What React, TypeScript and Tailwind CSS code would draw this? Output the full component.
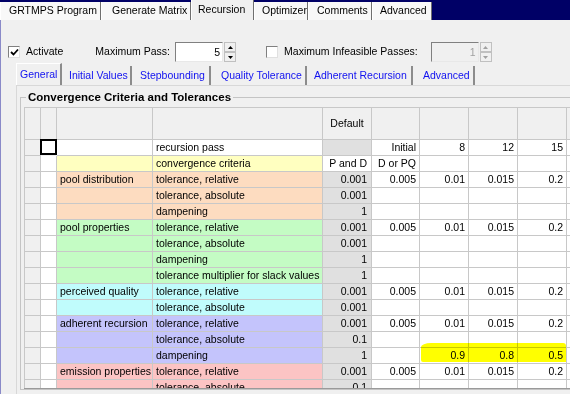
import React from 'react';

type Row = {
  bg: string;
  group?: string;
  label: string;
  def?: string;
  defWhite?: boolean;
  vals?: string[];
};

const rows: Row[] = [
  { bg: 'bg-white', label: 'recursion pass', vals: ['Initial', '8', '12', '15'] },
  { bg: 'bg-[#ffffc0]', label: 'convergence criteria', def: 'P and D', defWhite: true, vals: ['D or PQ'] },
  { bg: 'bg-[#fddcc0]', group: 'pool distribution', label: 'tolerance, relative', def: '0.001', vals: ['0.005', '0.01', '0.015', '0.2'] },
  { bg: 'bg-[#fddcc0]', label: 'tolerance, absolute', def: '0.001' },
  { bg: 'bg-[#fddcc0]', label: 'dampening', def: '1' },
  { bg: 'bg-[#c4fcc4]', group: 'pool properties', label: 'tolerance, relative', def: '0.001', vals: ['0.005', '0.01', '0.015', '0.2'] },
  { bg: 'bg-[#c4fcc4]', label: 'tolerance, absolute', def: '0.001' },
  { bg: 'bg-[#c4fcc4]', label: 'dampening', def: '1' },
  { bg: 'bg-[#c4fcc4]', label: 'tolerance multiplier for slack values', def: '1' },
  { bg: 'bg-[#c0fcfc]', group: 'perceived quality', label: 'tolerance, relative', def: '0.001', vals: ['0.005', '0.01', '0.015', '0.2'] },
  { bg: 'bg-[#c0fcfc]', label: 'tolerance, absolute', def: '0.001' },
  { bg: 'bg-[#c4c4fc]', group: 'adherent recursion', label: 'tolerance, relative', def: '0.001', vals: ['0.005', '0.01', '0.015', '0.2'] },
  { bg: 'bg-[#c4c4fc]', label: 'tolerance, absolute', def: '0.1' },
  { bg: 'bg-[#c4c4fc]', label: 'dampening', def: '1', vals: ['', '0.9', '0.8', '0.5'] },
  { bg: 'bg-[#fcc4c4]', group: 'emission properties', label: 'tolerance, relative', def: '0.001', vals: ['0.005', '0.01', '0.015', '0.2'] },
  { bg: 'bg-[#fcc4c4]', label: 'tolerance, absolute', def: '0.1' },
];

const cell = 'border-r border-b border-[#c8c8c8] h-[16px] leading-[15px] whitespace-nowrap overflow-hidden';
const head = 'border-r border-b border-[#c8c8c8] h-[32px] bg-[#f0f0f0]';

function Check({ on }: { on?: boolean }) {
  return (
    <span className="w-[12px] h-[12px] bg-white border border-t-[#808080] border-l-[#808080] border-b-[#e0e0e0] border-r-[#e0e0e0] flex items-center justify-center">
      {on && (
        <svg width="9" height="9" viewBox="0 0 9 9">
          <path d="M1 4 L3.5 6.5 L8 1.5" stroke="#000" strokeWidth="1.8" fill="none" />
        </svg>
      )}
    </span>
  );
}

function Spin({ value, disabled }: { value: string; disabled?: boolean }) {
  const c = disabled ? '#a0a0a0' : '#000';
  return (
    <div className="flex items-center h-[20px]">
      <div
        className={`w-[48px] h-[20px] border border-t-[#808080] border-l-[#808080] border-b-[#e8e8e8] border-r-[#e8e8e8] text-right pr-[2px] leading-[18px] ${
          disabled ? 'bg-[#f0f0f0] text-[#a0a0a0]' : 'bg-white'
        }`}
      >
        {value}
      </div>
      <div className="flex flex-col ml-px">
        <div className="w-[12px] h-[10px] bg-[#f0f0f0] border border-[#c0c0c0] flex items-center justify-center">
          <svg width="5" height="3" viewBox="0 0 5 3">
            <path d="M0 3 L2.5 0 L5 3Z" fill={c} />
          </svg>
        </div>
        <div className="w-[12px] h-[10px] bg-[#f0f0f0] border border-[#c0c0c0] flex items-center justify-center">
          <svg width="5" height="3" viewBox="0 0 5 3">
            <path d="M0 0 L5 0 L2.5 3Z" fill={c} />
          </svg>
        </div>
      </div>
    </div>
  );
}

const topTabs = [
  { t: 'GRTMPS Program', w: 'w-[101px] pl-[8px]' },
  { t: 'Generate Matrix', w: 'w-[90px] pl-[10px]' },
  { t: 'Recursion', w: 'w-[63px] pl-[6px]', sel: true },
  { t: 'Optimizer', w: 'w-[54px] pl-[7px]' },
  { t: 'Comments', w: 'w-[64px] pl-[8px]' },
  { t: 'Advanced', w: 'w-[60px] pl-[7px]' },
];

const subTabs = [
  { t: 'General', w: 'w-[46px] pl-[3px]', sel: true },
  { t: 'Initial Values', w: 'w-[70px] pl-[7px]' },
  { t: 'Stepbounding', w: 'w-[79px] pl-[8px]' },
  { t: 'Quality Tolerance', w: 'w-[96px] pl-[10px]' },
  { t: 'Adherent Recursion', w: 'w-[106px] pl-[7px]' },
  { t: 'Advanced', w: 'w-[62px] pl-[10px]' },
];

export default function App() {
  return (
    <div className="w-[570px] h-[394px] overflow-hidden bg-[#f0f0f0] font-['Liberation_Sans',Arial,sans-serif] text-[10.5px] text-black flex flex-col">
      {/* main tab strip */}
      <div className="h-[20px] bg-[#000066] flex items-end shrink-0">
        {topTabs.map((tab) => (
          <div
            key={tab.t}
            className={`${tab.w} ${tab.sel ? 'h-[20px] bg-[#f0f0f0]' : 'h-[18px] bg-[#f8f8f8]'} border-r border-r-[#707070] border-l border-l-white flex items-center text-[10.5px] whitespace-nowrap overflow-hidden`}
          >
            {tab.t}
          </div>
        ))}
      </div>

      <div className="flex-1 border-l border-l-[#8a8ac8] flex flex-col min-h-0">
        {/* options row */}
        <div className="flex items-center h-[20px] mt-[22px] shrink-0">
          <div className="ml-[7px] flex items-center gap-[6px]">
            <Check on />
            <span>Activate</span>
          </div>
          <span className="ml-[32px]">Maximum Pass:</span>
          <div className="ml-[5px]">
            <Spin value="5" />
          </div>
          <div className="ml-[30px] flex items-center gap-[6px]">
            <Check />
            <span>Maximum Infeasible Passes:</span>
          </div>
          <div className="ml-[13px]">
            <Spin value="1" disabled />
          </div>
        </div>

        {/* sub tabs */}
        <div className="flex items-end h-[22px] mt-[1px] pl-[15px] shrink-0">
          {subTabs.map((tab) => (
            <div
              key={tab.t}
              className={`${tab.w} ${tab.sel ? 'h-[22px] border-l border-t border-white' : 'h-[19px]'} border-r-2 border-r-[#8c8c8c] flex items-center text-[#1010f0] whitespace-nowrap`}
            >
              {tab.t}
            </div>
          ))}
        </div>

        {/* tab page */}
        <div className="flex-1 ml-[15px] border-l border-t border-[#d8d8d8] min-h-0 pt-[4px] pl-[3px]">
          <fieldset className="border border-[#c4c4c4] border-r-0 pl-[3px] pt-[3px] h-[300px]">
            <legend className="ml-[2px] px-[2px] font-bold text-[11.5px] leading-[14px]">
              Convergence Criteria and Tolerances
            </legend>
            <div className="relative h-[282px] overflow-hidden border-b border-[#9a9a9a] bg-[#f0f0f0]">
              <div className="grid grid-cols-[16px_16px_96px_170px_49px_48px_49px_49px_49px_60px] border-t border-l border-[#c8c8c8] w-[602px]">
                <div className={head} />
                <div className={head} />
                <div className={head} />
                <div className={head} />
                <div className={`${head} flex items-center justify-center`}>Default</div>
                <div className={head} />
                <div className={head} />
                <div className={head} />
                <div className={head} />
                <div className={head} />

                {rows.map((r, i) => {
                  const vals = r.vals ?? [];
                  return (
                    <React.Fragment key={i}>
                      <div className={`${cell} bg-[#f0f0f0]`} />
                      {i === 0 ? (
                        <div className="h-[16px] bg-white border-2 border-black -ml-px -mt-px w-[17px]" />
                      ) : (
                        <div className={`${cell} bg-white`} />
                      )}
                      <div className={`${cell} ${r.bg} pl-[3px]`}>{r.group ?? ''}</div>
                      <div className={`${cell} ${r.bg} pl-[3px]`}>{r.label}</div>
                      <div className={`${cell} ${r.defWhite ? 'bg-white' : 'bg-[#e0e0e0]'} text-right pr-[4px]`}>
                        {r.def ?? ''}
                      </div>
                      <div className={`${cell} bg-white text-right pr-[3px]`}>{vals[0] ?? ''}</div>
                      <div className={`${cell} bg-white text-right pr-[3px]`}>{vals[1] ?? ''}</div>
                      <div className={`${cell} bg-white text-right pr-[3px]`}>{vals[2] ?? ''}</div>
                      <div className={`${cell} bg-white text-right pr-[3px]`}>{vals[3] ?? ''}</div>
                      <div className={`${cell} bg-white`} />
                    </React.Fragment>
                  );
                })}
              </div>
              {/* highlighter mark */}
              <div className="absolute left-[397px] top-[236px] w-[145px] h-[19px] bg-[#ffff00] mix-blend-multiply rounded-tl-[10px_4px] rounded-tr-[3px] rounded-bl-[2px]" />
            </div>
          </fieldset>
        </div>
      </div>
    </div>
  );
}
